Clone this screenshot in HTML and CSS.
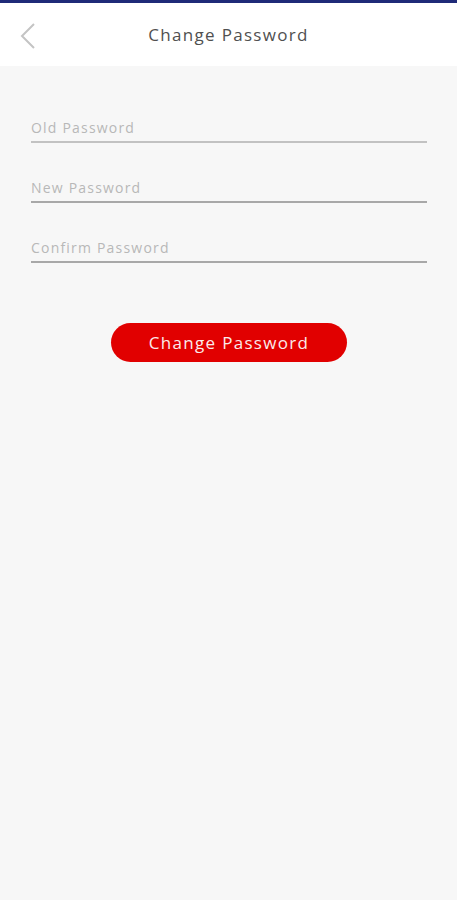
FILE: index.html
```html
<!DOCTYPE html>
<html>
<head>
    <title>Change Password</title>
    <link rel="stylesheet" href="styles.css">
</head>
<body>
    <div class="topbar"></div>
    <header class="header">
        <button class="back" type="button" aria-label="Back">
            <svg width="18" height="28" viewBox="0 0 18 28">
                <path d="M15 2 L3 14 L15 26" fill="none" stroke="#c4c4c4" stroke-width="2" />
            </svg>
        </button>
        <h1 class="title">Change Password</h1>
    </header>

    <form class="form" id="change-password-form">
        <input class="field" type="password" placeholder="Old Password" />
        <input class="field" type="password" placeholder="New Password" />
        <input class="field" type="password" placeholder="Confirm Password" />
        <button class="submit" type="submit">Change Password</button>
    </form>
</body>
</html>
```

FILE: styles.css
```css
body {
    font-family: "Open Sans", Arial, sans-serif;
    background-color: #f7f7f7;
    margin: 0;
    padding: 0;
}

.topbar {
    height: 3px;
    background-color: #1f2a78;
}

.header {
    display: flex;
    align-items: center;
    justify-content: center;
    height: 63px;
    background-color: #ffffff;
    position: relative;
}

.back {
    position: absolute;
    left: 19px;
    top: 19px;
    padding: 0;
    border: none;
    background: none;
}

.title {
    margin: 0;
    font-size: 17px;
    font-weight: 400;
    color: #505050;
    letter-spacing: 1.3px;
}

.form {
    display: flex;
    flex-direction: column;
    padding: 47px 30px 0 31px;
}

.field {
    height: 28px;
    padding: 0;
    margin-bottom: 30px;
    border: none;
    border-bottom: 2px solid #a8a8a8;
    background: transparent;
    font-family: inherit;
    font-size: 14px;
    letter-spacing: 1.2px;
    outline: none;
}

.field:first-child {
    border-bottom-color: #c2c2c2;
}

.field::placeholder {
    color: #b8b8b8;
}

.submit {
    align-self: center;
    width: 236px;
    height: 39px;
    margin-top: 30px;
    background-color: #e10000;
    color: #fbeaea;
    border: none;
    border-radius: 20px;
    font-family: inherit;
    font-size: 17px;
    letter-spacing: 1.3px;
    cursor: pointer;
}
```
